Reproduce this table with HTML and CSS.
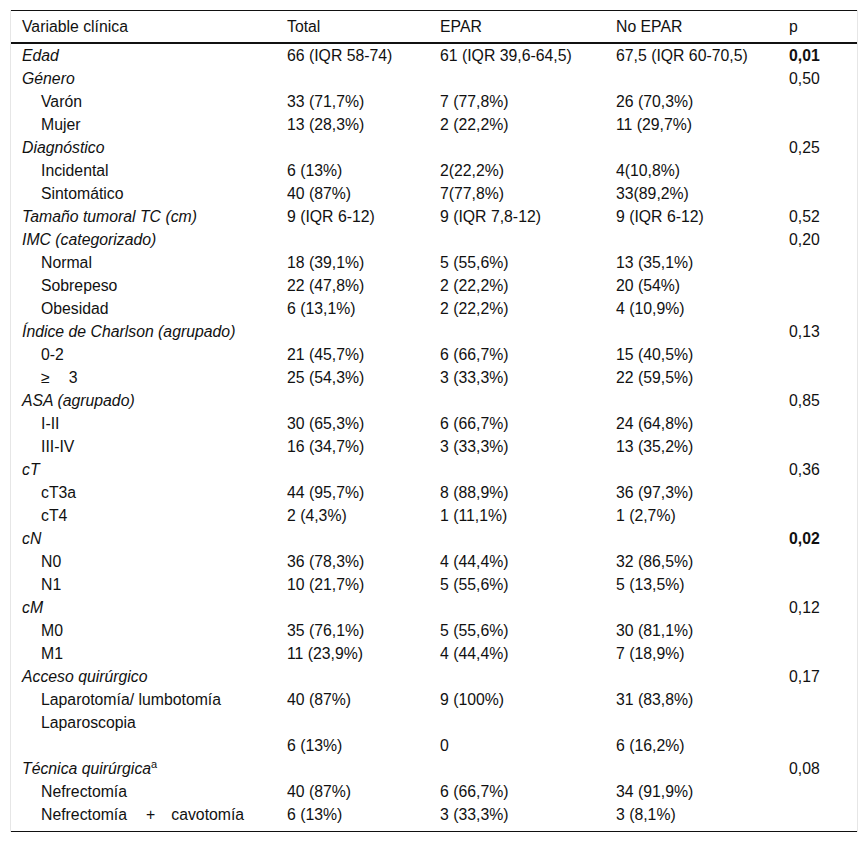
FILE: index.html
```html
<!DOCTYPE html>
<html lang="es">
<head>
<meta charset="utf-8">
<title>Tabla</title>
<link rel="stylesheet" href="styles.css">
</head>
<body>
<div class="wrap">
<table class="tbl">
<colgroup>
<col class="c1"><col class="c2"><col class="c3"><col class="c4"><col class="c5">
</colgroup>
<thead>
<tr><th>Variable clínica</th><th>Total</th><th>EPAR</th><th>No EPAR</th><th>p</th></tr>
</thead>
<tbody>
<tr><td class="grp">Edad</td><td>66 (IQR 58-74)</td><td>61 (IQR 39,6-64,5)</td><td>67,5 (IQR 60-70,5)</td><td class="b">0,01</td></tr>
<tr><td class="grp">Género</td><td></td><td></td><td></td><td>0,50</td></tr>
<tr><td class="sub">Varón</td><td>33 (71,7%)</td><td>7 (77,8%)</td><td>26 (70,3%)</td><td></td></tr>
<tr><td class="sub">Mujer</td><td>13 (28,3%)</td><td>2 (22,2%)</td><td>11 (29,7%)</td><td></td></tr>
<tr><td class="grp">Diagnóstico</td><td></td><td></td><td></td><td>0,25</td></tr>
<tr><td class="sub">Incidental</td><td>6 (13%)</td><td>2(22,2%)</td><td>4(10,8%)</td><td></td></tr>
<tr><td class="sub">Sintomático</td><td>40 (87%)</td><td>7(77,8%)</td><td>33(89,2%)</td><td></td></tr>
<tr><td class="grp">Tamaño tumoral TC (cm)</td><td>9 (IQR 6-12)</td><td>9 (IQR 7,8-12)</td><td>9 (IQR 6-12)</td><td>0,52</td></tr>
<tr><td class="grp">IMC (categorizado)</td><td></td><td></td><td></td><td>0,20</td></tr>
<tr><td class="sub">Normal</td><td>18 (39,1%)</td><td>5 (55,6%)</td><td>13 (35,1%)</td><td></td></tr>
<tr><td class="sub">Sobrepeso</td><td>22 (47,8%)</td><td>2 (22,2%)</td><td>20 (54%)</td><td></td></tr>
<tr><td class="sub">Obesidad</td><td>6 (13,1%)</td><td>2 (22,2%)</td><td>4 (10,9%)</td><td></td></tr>
<tr><td class="grp">Índice de Charlson (agrupado)</td><td></td><td></td><td></td><td>0,13</td></tr>
<tr><td class="sub">0-2</td><td>21 (45,7%)</td><td>6 (66,7%)</td><td>15 (40,5%)</td><td></td></tr>
<tr><td class="sub">≥<span class="sp"></span>3</td><td>25 (54,3%)</td><td>3 (33,3%)</td><td>22 (59,5%)</td><td></td></tr>
<tr><td class="grp">ASA (agrupado)</td><td></td><td></td><td></td><td>0,85</td></tr>
<tr><td class="sub">I-II</td><td>30 (65,3%)</td><td>6 (66,7%)</td><td>24 (64,8%)</td><td></td></tr>
<tr><td class="sub">III-IV</td><td>16 (34,7%)</td><td>3 (33,3%)</td><td>13 (35,2%)</td><td></td></tr>
<tr><td class="grp">cT</td><td></td><td></td><td></td><td>0,36</td></tr>
<tr><td class="sub">cT3a</td><td>44 (95,7%)</td><td>8 (88,9%)</td><td>36 (97,3%)</td><td></td></tr>
<tr><td class="sub">cT4</td><td>2 (4,3%)</td><td>1 (11,1%)</td><td>1 (2,7%)</td><td></td></tr>
<tr><td class="grp">cN</td><td></td><td></td><td></td><td class="b">0,02</td></tr>
<tr><td class="sub">N0</td><td>36 (78,3%)</td><td>4 (44,4%)</td><td>32 (86,5%)</td><td></td></tr>
<tr><td class="sub">N1</td><td>10 (21,7%)</td><td>5 (55,6%)</td><td>5 (13,5%)</td><td></td></tr>
<tr><td class="grp">cM</td><td></td><td></td><td></td><td>0,12</td></tr>
<tr><td class="sub">M0</td><td>35 (76,1%)</td><td>5 (55,6%)</td><td>30 (81,1%)</td><td></td></tr>
<tr><td class="sub">M1</td><td>11 (23,9%)</td><td>4 (44,4%)</td><td>7 (18,9%)</td><td></td></tr>
<tr><td class="grp">Acceso quirúrgico</td><td></td><td></td><td></td><td>0,17</td></tr>
<tr><td class="sub">Laparotomía/ lumbotomía</td><td>40 (87%)</td><td>9 (100%)</td><td>31 (83,8%)</td><td></td></tr>
<tr><td class="sub">Laparoscopia</td><td></td><td></td><td></td><td></td></tr>
<tr><td class="sub"></td><td>6 (13%)</td><td>0</td><td>6 (16,2%)</td><td></td></tr>
<tr><td class="grp">Técnica quirúrgica<sup class="sup">a</sup></td><td></td><td></td><td></td><td>0,08</td></tr>
<tr><td class="sub">Nefrectomía</td><td>40 (87%)</td><td>6 (66,7%)</td><td>34 (91,9%)</td><td></td></tr>
<tr class="last"><td class="sub">Nefrectomía<span class="sp2"></span>+<span class="sp3"></span>cavotomía</td><td>6 (13%)</td><td>3 (33,3%)</td><td>3 (8,1%)</td><td></td></tr>
</tbody>
</table>
</div>
</body>
</html>
```
FILE: styles.css
```css
html, body {
  margin: 0;
  padding: 0;
  background: #fff;
}
body {
  font-family: "Liberation Sans", Arial, sans-serif;
  font-size: 15.8px;
  color: #111;
}
.wrap {
  margin: 10px 0 0 10px;
  width: 846px;
  border-left: 1px solid #e6e6e6;
  border-right: 1px solid #e6e6e6;
}
.tbl {
  width: 100%;
  border-collapse: collapse;
  table-layout: fixed;
  border-top: 1px solid #111;
  border-bottom: 1px solid #111;
}
.c1 { width: 265px; }
.c2 { width: 153px; }
.c3 { width: 176px; }
.c4 { width: 173px; }
.c5 { width: 79px; }
.tbl th {
  font-weight: normal;
  text-align: left;
  padding: 1px 11px 0;
  height: 30px;
  line-height: 30px;
  border-bottom: 2px solid #111;
  white-space: nowrap;
}
.tbl td {
  padding: 1px 11px 0;
  height: 22px;
  line-height: 22px;
  white-space: nowrap;
  vertical-align: top;
}
.tbl td.grp {
  font-style: italic;
}
.tbl td.sub {
  padding-left: 30px;
}
.tbl td.b {
  font-weight: bold;
}
.tbl tr.last td {
  height: 27px;
}
.sup {
  font-style: normal;
  font-size: 11px;
  line-height: 0;
  vertical-align: 6px;
}
.sp {
  display: inline-block;
  width: 19px;
}
.sp2 {
  display: inline-block;
  width: 19px;
}
.sp3 {
  display: inline-block;
  width: 16px;
}
```
